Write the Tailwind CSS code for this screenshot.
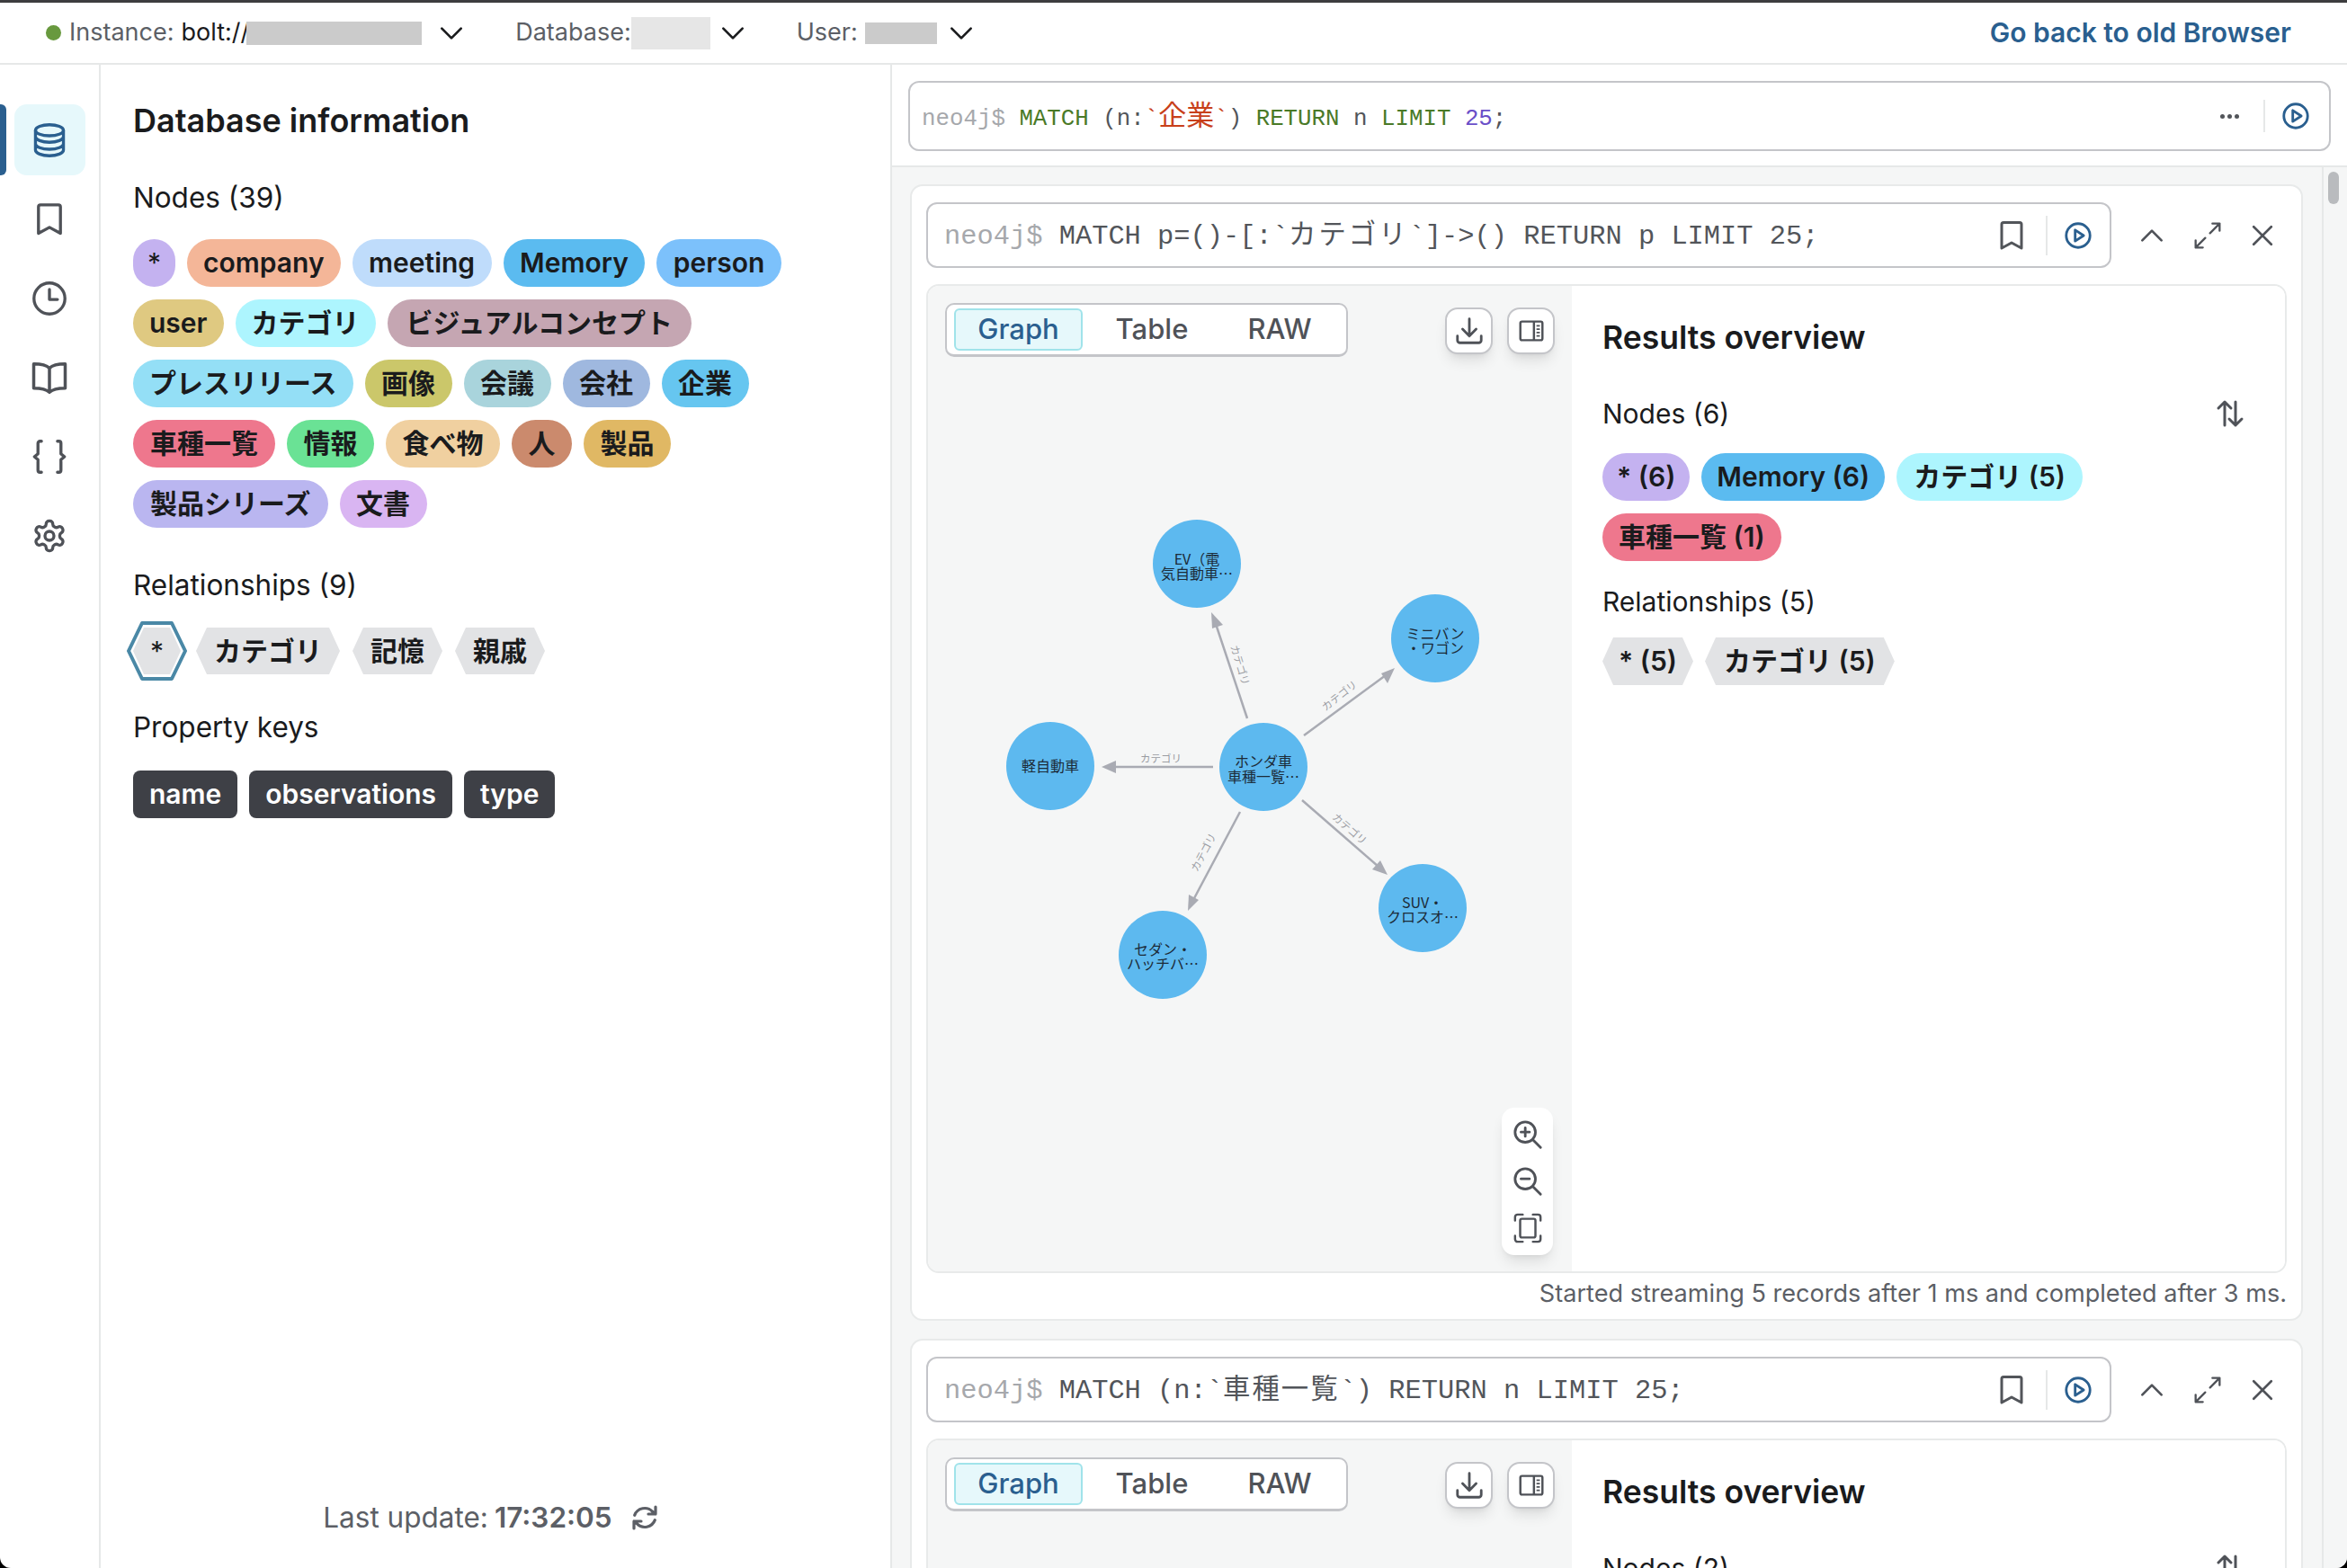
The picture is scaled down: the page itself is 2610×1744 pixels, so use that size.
<!DOCTYPE html>
<html lang="ja">
<head>
  <meta charset="UTF-8">
  <title>Neo4j Browser</title>
  <script src="https://cdn.jsdelivr.net/npm/@tailwindcss/browser@4"></script>
</head>
<body class="bg-black text-[#1a1b1d] font-['Inter','Noto_Sans_CJK_JP',sans-serif] overflow-hidden">
  <!-- shared icons -->
  <svg class="hidden">
    <symbol id="i-bookmark" viewBox="0 0 36 36"><path d="M7 5.500a2 2 0 0 1 2-2h18a2 2 0 0 1 2 2V32l-11-6-11 6z" fill="none" stroke="currentColor" stroke-width="3" stroke-linejoin="round"/></symbol>
    <symbol id="i-play" viewBox="0 0 36 36"><circle cx="18" cy="18" r="14" fill="none" stroke="currentColor" stroke-width="3"/><path d="M14.500 11.500v13l10-6.500z" fill="none" stroke="currentColor" stroke-width="3" stroke-linejoin="round"/></symbol>
    <symbol id="i-up" viewBox="0 0 36 36"><path d="M6 24 18 12l12 12" fill="none" stroke="currentColor" stroke-width="3" stroke-linecap="round" stroke-linejoin="round"/></symbol>
    <symbol id="i-down" viewBox="0 0 36 36"><path d="M6 12l12 12 12-12" fill="none" stroke="currentColor" stroke-width="3" stroke-linecap="round" stroke-linejoin="round"/></symbol>
    <symbol id="i-expand" viewBox="0 0 36 36"><path d="M21 15 33 3m-9 0h9v9M15 21 3 33m9 0H3v-9" fill="none" stroke="currentColor" stroke-width="2.600" stroke-linecap="round" stroke-linejoin="round"/></symbol>
    <symbol id="i-x" viewBox="0 0 36 36"><path d="M7 7l22 22M29 7 7 29" fill="none" stroke="currentColor" stroke-width="3" stroke-linecap="round"/></symbol>
    <symbol id="i-download" viewBox="0 0 36 36"><path d="M18 4v20m-8-8 8 8 8-8M4 24v5a3 3 0 0 0 3 3h22a3 3 0 0 0 3-3v-5" fill="none" stroke="currentColor" stroke-width="3" stroke-linecap="round" stroke-linejoin="round"/></symbol>
    <symbol id="i-panel" viewBox="0 0 36 36"><rect x="5" y="7" width="26" height="22" rx="2" fill="none" stroke="currentColor" stroke-width="2.600"/><path d="M21 7v22" stroke="currentColor" stroke-width="2.600"/><path d="M24 12h4M24 16h4M24 20h4M24 24h4" stroke="currentColor" stroke-width="2"/></symbol>
    <symbol id="i-sort" viewBox="0 0 36 36"><path d="M12 31V5M5 12l7-7 7 7M24 5v26m-7-7 7 7 7-7" fill="none" stroke="currentColor" stroke-width="3" stroke-linecap="round" stroke-linejoin="round"/></symbol>
  </svg>

  <div class="w-[2610px] h-[1744px] flex flex-col bg-white rounded-b-[12px] border-t-[3px] border-[#3d3d3f] overflow-hidden">
    <!-- top bar -->
    <header class="h-[69px] shrink-0 border-b-2 border-[#e6e8e8] flex items-center text-[27px] text-[#5c5f66] pr-[62px]">
      <span class="ml-[51px] w-[17px] h-[17px] rounded-full bg-[#68993e]"></span>
      <span class="ml-[9px]">Instance:</span>
      <span class="ml-[8px] text-[#1a1b1d]">bolt://</span>
      <span class="-ml-[3px] w-[195px] h-[26px] bg-[#cbcbcb]"></span>
      <svg class="ml-[17px] w-[32px] h-[32px] text-[#1a1b1d]"><use href="#i-down"/></svg>
      <span class="ml-[55px]">Database:</span>
      <span class="w-[88px] h-[36px] bg-[#e6e6e6]"></span>
      <svg class="ml-[9px] w-[32px] h-[32px] text-[#1a1b1d]"><use href="#i-down"/></svg>
      <span class="ml-[55px]">User:</span>
      <span class="ml-[8px] w-[80px] h-[24px] bg-[#cbcbcb]"></span>
      <svg class="ml-[11px] w-[32px] h-[32px] text-[#1a1b1d]"><use href="#i-down"/></svg>
      <a class="ml-auto font-semibold text-[#2a5f8f] text-[30px]">Go back to old Browser</a>
    </header>

    <div class="flex flex-1 min-h-0">
      <!-- icon rail -->
      <nav class="relative w-[112px] shrink-0 border-r-2 border-[#e6e8e8] flex flex-col items-center gap-[9px] pt-[44px] text-[#4f5258]">
        <span class="absolute left-0 top-[44px] w-[7px] h-[79px] rounded-r-[6px] bg-[#2a5f8f]"></span>
        <div class="w-[79px] h-[79px] rounded-[14px] bg-[#e6f8fb] flex items-center justify-center text-[#2a5f8f]">
          <svg class="w-[40px] h-[40px]" viewBox="0 0 36 36" fill="none" stroke="currentColor" stroke-width="3"><ellipse cx="18" cy="8" rx="14" ry="5.500"/><path d="M4 8v20c0 3 6.300 5.500 14 5.500S32 31 32 28V8M4 14.500c0 3 6.300 5.500 14 5.500s14-2.500 14-5.500M4 21.500c0 3 6.300 5.500 14 5.500s14-2.500 14-5.500"/></svg>
        </div>
        <div class="w-[79px] h-[79px] flex items-center justify-center"><svg class="w-[40px] h-[40px]"><use href="#i-bookmark"/></svg></div>
        <div class="w-[79px] h-[79px] flex items-center justify-center">
          <svg class="w-[40px] h-[40px]" viewBox="0 0 36 36" fill="none" stroke="currentColor" stroke-width="3" stroke-linecap="round" stroke-linejoin="round"><circle cx="18" cy="18" r="15.500"/><path d="M18 9v10h8"/></svg>
        </div>
        <div class="w-[79px] h-[79px] flex items-center justify-center">
          <svg class="w-[42px] h-[42px]" viewBox="0 0 36 36" fill="none" stroke="currentColor" stroke-width="3" stroke-linejoin="round"><path d="M18 9c-3-3-8-4-15-4v23c7 0 12 1 15 4 3-3 8-4 15-4V5c-7 0-12 1-15 4zM18 9v23"/></svg>
        </div>
        <div class="w-[79px] h-[79px] flex items-center justify-center">
          <svg class="w-[40px] h-[40px]" viewBox="0 0 36 36" fill="none" stroke="currentColor" stroke-width="3" stroke-linecap="round" stroke-linejoin="round"><path d="M10 2.500H8.500a2 2 0 0 0-2 2V15L3 18l3.500 3v10.500a2 2 0 0 0 2 2H10M26 2.500h1.500a2 2 0 0 1 2 2V15L33 18l-3.500 3v10.500a2 2 0 0 1-2 2H26"/></svg>
        </div>
        <div class="w-[79px] h-[79px] flex items-center justify-center">
          <svg class="w-[40px] h-[40px]" viewBox="0 0 24 24" fill="none" stroke="currentColor" stroke-width="2" stroke-linecap="round" stroke-linejoin="round"><path d="M12.220 2h-.44a2 2 0 0 0-2 2v.18a2 2 0 0 1-1 1.730l-.43.25a2 2 0 0 1-2 0l-.15-.08a2 2 0 0 0-2.730.73l-.22.38a2 2 0 0 0 .73 2.730l.15.1a2 2 0 0 1 1 1.720v.51a2 2 0 0 1-1 1.740l-.15.09a2 2 0 0 0-.73 2.730l.22.38a2 2 0 0 0 2.730.73l.15-.08a2 2 0 0 1 2 0l.43.25a2 2 0 0 1 1 1.730V20a2 2 0 0 0 2 2h.44a2 2 0 0 0 2-2v-.18a2 2 0 0 1 1-1.730l.43-.25a2 2 0 0 1 2 0l.15.08a2 2 0 0 0 2.730-.73l.22-.39a2 2 0 0 0-.73-2.730l-.15-.08a2 2 0 0 1-1-1.740v-.5a2 2 0 0 1 1-1.740l.15-.09a2 2 0 0 0 .73-2.730l-.22-.38a2 2 0 0 0-2.730-.73l-.15.08a2 2 0 0 1-2 0l-.43-.25a2 2 0 0 1-1-1.730V4a2 2 0 0 0-2-2z"/><circle cx="12" cy="12" r="3"/></svg>
        </div>
      </nav>

      <!-- database information -->
      <aside class="w-[880px] shrink-0 border-r-2 border-[#e6e8e8] pl-[36px] pr-[40px] pt-[42px] pb-[36px] flex flex-col">
        <h2 class="text-[36px] font-semibold leading-[40px]">Database information</h2>
        <h3 class="mt-[44px] pt-[2px] text-[31.500px] leading-[40px]">Nodes (39)</h3>
        <div class="mt-[26px] flex flex-wrap gap-x-[13px] gap-y-[14px] text-[30px] font-semibold">
          <span class="h-[53px] px-[16px] rounded-full bg-[#c4b2f0] flex items-center font-normal">*</span>
          <span class="h-[53px] px-[18px] rounded-full bg-[#f4b698] flex items-center">company</span>
          <span class="h-[53px] px-[18.500px] rounded-full bg-[#bfdcfb] flex items-center">meeting</span>
          <span class="h-[53px] px-[18.500px] rounded-full bg-[#5bbbf0] flex items-center">Memory</span>
          <span class="h-[53px] px-[18.500px] rounded-full bg-[#7cc1fb] flex items-center">person</span>
          <span class="h-[53px] px-[18px] rounded-full bg-[#dfc981] flex items-center">user</span>
          <span class="h-[53px] px-[18px] rounded-full bg-[#adf5fe] flex items-center">カテゴリ</span>
          <span class="h-[53px] px-[21px] rounded-full bg-[#c5a6b2] flex items-center">ビジュアルコンセプト</span>
          <span class="h-[53px] px-[18px] rounded-full bg-[#94dff6] flex items-center">プレスリリース</span>
          <span class="h-[53px] px-[18.500px] rounded-full bg-[#cbc76a] flex items-center">画像</span>
          <span class="h-[53px] px-[18.500px] rounded-full bg-[#a9d4dc] flex items-center">会議</span>
          <span class="h-[53px] px-[18.500px] rounded-full bg-[#9fb8df] flex items-center">会社</span>
          <span class="h-[53px] px-[18.500px] rounded-full bg-[#66c6f0] flex items-center">企業</span>
          <span class="h-[53px] px-[19px] rounded-full bg-[#ee778d] flex items-center">車種一覧</span>
          <span class="h-[53px] px-[18.500px] rounded-full bg-[#6ae295] flex items-center">情報</span>
          <span class="h-[53px] px-[18.500px] rounded-full bg-[#f0d0a0] flex items-center">食べ物</span>
          <span class="h-[53px] px-[18.500px] rounded-full bg-[#cb8a6d] flex items-center">人</span>
          <span class="h-[53px] px-[18.500px] rounded-full bg-[#e0b864] flex items-center">製品</span>
          <span class="h-[53px] px-[19px] rounded-full bg-[#bab6f0] flex items-center">製品シリーズ</span>
          <span class="h-[53px] px-[18.500px] rounded-full bg-[#d9b5f2] flex items-center">文書</span>
        </div>
        <h3 class="mt-[42px] pt-[2px] text-[31.500px] leading-[40px]">Relationships (9)</h3>
        <div class="mt-[27px] flex gap-x-[14px] text-[30px] font-semibold">
          <span class="relative w-[53px] mr-[3px] h-[52px] flex items-center justify-center font-normal">
            <span class="absolute inset-0 bg-[#e2e3e5] [clip-path:polygon(12px_0,calc(100%-12px)_0,100%_50%,calc(100%-12px)_100%,12px_100%,0_50%)]"></span>
            <svg class="absolute left-[-7px] top-[-7px] w-[67px] h-[66px]" viewBox="0 0 67 66" fill="none" stroke="#4a88a6" stroke-width="4" stroke-linejoin="round"><path d="M17 2h33l15 31-15 31H17L2 33z"/></svg>
            <span class="relative">*</span>
          </span>
          <span class="h-[52px] px-[20px] bg-[#e2e3e5] flex items-center [clip-path:polygon(12px_0,calc(100%-12px)_0,100%_50%,calc(100%-12px)_100%,12px_100%,0_50%)]">カテゴリ</span>
          <span class="h-[52px] px-[20px] bg-[#e2e3e5] flex items-center [clip-path:polygon(12px_0,calc(100%-12px)_0,100%_50%,calc(100%-12px)_100%,12px_100%,0_50%)]">記憶</span>
          <span class="h-[52px] px-[20px] bg-[#e2e3e5] flex items-center [clip-path:polygon(12px_0,calc(100%-12px)_0,100%_50%,calc(100%-12px)_100%,12px_100%,0_50%)]">親戚</span>
        </div>
        <h3 class="mt-[39px] text-[31.500px] leading-[40px]">Property keys</h3>
        <div class="mt-[28px] flex gap-x-[13px] text-[30px] font-semibold text-white">
          <span class="h-[53px] px-[18px] rounded-[8px] bg-[#3e4046] flex items-center">name</span>
          <span class="h-[53px] px-[18px] rounded-[8px] bg-[#3e4046] flex items-center">observations</span>
          <span class="h-[53px] px-[18px] rounded-[8px] bg-[#3e4046] flex items-center">type</span>
        </div>
        <div class="mt-auto h-[40px] flex items-center justify-center text-[31.500px] text-[#5c5f66] pr-[6px]">
          <span>Last update:</span>
          <span class="ml-[7px] font-semibold">17:32:05</span>
          <svg class="ml-[20px] w-[32px] h-[32px]" viewBox="0 0 24 24" fill="none" stroke="currentColor" stroke-width="2.400" stroke-linecap="round" stroke-linejoin="round"><path d="M21 3v6h-6M3 21v-6h6M3.500 10a9 9 0 0 1 15-3L21 9M20.500 14a9 9 0 0 1-15 3L3 15"/></svg>
        </div>
      </aside>

      <!-- editor and results -->
      <main class="flex-1 min-w-0 flex flex-col bg-[#f5f6f6]">
        <div class="h-[114px] shrink-0 bg-white border-b-2 border-[#e6e8e8] px-[18px] pt-[18px]">
          <div class="h-[78px] rounded-[12px] border-2 border-[#c4c5c9] bg-white flex items-center pl-[13px] pr-[20px] font-['Liberation_Mono','Noto_Sans_CJK_JP',monospace] text-[25.800px] text-[#52555a] whitespace-pre">
            <span class="pt-[4px]"><span class="text-[#a6a8ac]">neo4j$ </span><span class="text-[#4a7a28]">MATCH</span><span> (n:</span><span class="text-[#c8401a]">`<span class="text-[31px]">企業</span>`</span><span>) </span><span class="text-[#4a7a28]">RETURN</span><span> n </span><span class="text-[#4a7a28]">LIMIT</span><span> </span><span class="text-[#6a4fc8]">25</span><span>;</span></span>
            <span class="ml-auto text-[#52555a] flex gap-[3px]"><i class="w-[5px] h-[5px] rounded-full bg-current"></i><i class="w-[5px] h-[5px] rounded-full bg-current"></i><i class="w-[5px] h-[5px] rounded-full bg-current"></i></span>
            <span class="ml-[27px] w-[2px] h-[36px] bg-[#e6e8e8]"></span>
            <svg class="ml-[17px] w-[34px] h-[34px] text-[#2a5f8f]"><use href="#i-play"/></svg>
          </div>
        </div>

        <div class="flex-1 min-h-0 flex">
          <div class="flex-1 min-w-0 pl-[20px] pr-[21px] pt-[19px] flex flex-col gap-[20px] overflow-hidden">
            <!-- first result -->
            <section class="h-[1264px] shrink-0 rounded-[14px] border-2 border-[#e8eaea] bg-white px-[16px] pt-[18px]">
              <div class="flex items-center">
                <div class="w-[1318px] h-[73px] rounded-[12px] border-2 border-[#c4c5c9] flex items-center pl-[18px] pr-[18px] font-['Liberation_Mono','Noto_Sans_CJK_JP',monospace] text-[30.400px] text-[#52555a] whitespace-pre">
                  <span class="pt-[5px] text-[#a6a8ac]">neo4j$ </span><span class="pt-[5px]">MATCH p=()-[:`<span class="tracking-[3px]">カテゴリ</span>`]-&gt;() RETURN p LIMIT 25;</span>
                  <svg class="ml-auto w-[36px] h-[36px]"><use href="#i-bookmark"/></svg>
                  <span class="ml-[20px] w-[2px] h-[44px] bg-[#e6e8e8]"></span>
                  <svg class="ml-[17px] w-[34px] h-[34px] text-[#2a5f8f]"><use href="#i-play"/></svg>
                </div>
                <div class="flex-1 flex items-center text-[#4f5258] pl-[29px]">
                  <svg class="w-[32px] h-[32px]"><use href="#i-up"/></svg>
                  <svg class="ml-[30px] w-[32px] h-[32px]"><use href="#i-expand"/></svg>
                  <svg class="ml-[29px] w-[32px] h-[32px]"><use href="#i-x"/></svg>
                </div>
              </div>
              <div class="mt-[18px] h-[1100px] rounded-[14px] border-2 border-[#e8eaea] overflow-hidden flex">
                <div class="relative w-[716px] shrink-0 bg-[#f5f6f6]">
                  <svg class="absolute inset-0 w-[716px] h-[1098px] font-['Noto_Sans_CJK_JP',sans-serif]" viewBox="1031 318 716 1098">
                    <g stroke="#a9abb3" stroke-width="2.500">
                      <path d="M1386 799 1351 694"/>
                      <path d="M1449 818 1540 751"/>
                      <path d="M1348 853H1236"/>
                      <path d="M1447 890 1532 964"/>
                      <path d="M1378 903 1326 1001"/>
                    </g>
                    <g fill="#a9abb3">
                      <path d="M1346 681 1359 695 1347 699z"/>
                      <path d="M1550 743 1542 760 1535 749z"/>
                      <path d="M1224 853 1240 846 1240 860z"/>
                      <path d="M1542 973 1525 967 1534 957z"/>
                      <path d="M1320 1013 1321 995 1332 1001z"/>
                    </g>
                    <g font-size="11.500" fill="#9a9ca2" text-anchor="middle">
                      <text transform="translate(1374 741) rotate(73)">カテゴリ</text>
                      <text transform="translate(1491 777) rotate(-38)">カテゴリ</text>
                      <text x="1290" y="848">カテゴリ</text>
                      <text transform="translate(1497 925) rotate(41)">カテゴリ</text>
                      <text transform="translate(1341 950) rotate(-62)">カテゴリ</text>
                    </g>
                    <g fill="#5db9ef">
                      <circle cx="1330" cy="627" r="49"/>
                      <circle cx="1595" cy="710" r="49"/>
                      <circle cx="1167" cy="852" r="49"/>
                      <circle cx="1404" cy="853" r="49"/>
                      <circle cx="1581" cy="1010" r="49"/>
                      <circle cx="1292" cy="1062" r="49"/>
                    </g>
                    <g font-size="16" fill="#1c2b38" text-anchor="middle">
                      <text x="1330" y="628">EV（電</text><text x="1330" y="644">気自動車…</text>
                      <text x="1595" y="711">ミニバン</text><text x="1595" y="727">・ワゴン</text>
                      <text x="1167" y="858">軽自動車</text>
                      <text x="1404" y="853">ホンダ車</text><text x="1404" y="870">車種一覧…</text>
                      <text x="1581" y="1010">SUV・</text><text x="1581" y="1026">クロスオ…</text>
                      <text x="1292" y="1062">セダン・</text><text x="1292" y="1078">ハッチバ…</text>
                    </g>
                  </svg>
                  <div class="absolute left-[19px] top-[19px] w-[448px] h-[60px] rounded-[10px] border-2 border-b-[3px] border-[#c4c5c9] bg-white flex items-center pl-[8px] text-[31px] font-medium text-[#4f5258]">
                    <span class="w-[143px] h-[47px] rounded-[6px] border-2 border-[#a0e3ea] bg-[#e6f8fb] text-[#2a5f8f] flex items-center justify-center">Graph</span>
                    <span class="ml-[6px] w-[142px] text-center">Table</span>
                    <span class="w-[142px] text-center">RAW</span>
                  </div>
                  <div class="absolute left-[575px] top-[24px] w-[53px] h-[52px] rounded-[14px] border-2 border-[#c4c5c9] bg-white shadow-lg flex items-center justify-center text-[#4f5258]"><svg class="w-[34px] h-[34px]"><use href="#i-download"/></svg></div>
                  <div class="absolute left-[644px] top-[24px] w-[53px] h-[52px] rounded-[14px] border-2 border-[#c4c5c9] bg-white shadow-lg flex items-center justify-center text-[#4f5258]"><svg class="w-[34px] h-[34px]"><use href="#i-panel"/></svg></div>
                  <div class="absolute left-[638px] top-[914px] w-[57px] h-[164px] rounded-[14px] bg-white shadow-lg flex flex-col items-center justify-between py-[13px] text-[#4f5258]">
                    <svg class="w-[34px] h-[34px]" viewBox="0 0 36 36" fill="none" stroke="currentColor" stroke-width="3" stroke-linecap="round"><circle cx="15" cy="15" r="12"/><path d="M24 24l9 9M15 10v10M10 15h10"/></svg>
                    <svg class="w-[34px] h-[34px]" viewBox="0 0 36 36" fill="none" stroke="currentColor" stroke-width="3" stroke-linecap="round"><circle cx="15" cy="15" r="12"/><path d="M24 24l9 9M10 15h10"/></svg>
                    <svg class="w-[34px] h-[34px]" viewBox="0 0 36 36" fill="none" stroke="currentColor" stroke-width="2.600" stroke-linecap="round" stroke-linejoin="round"><rect x="9" y="7" width="18" height="22" rx="2"/><path d="M3 9V5a3 3 0 0 1 3-3h6M24 2h6a3 3 0 0 1 3 3v4M33 27v4a3 3 0 0 1-3 3h-6M12 34H6a3 3 0 0 1-3-3v-4"/></svg>
                  </div>
                </div>
                <div class="flex-1 min-w-0 bg-white pl-[34px] pr-[43px] pt-[38px]">
                  <h2 class="text-[35.500px] font-semibold leading-[40px]">Results overview</h2>
                  <div class="mt-[44px] flex items-center justify-between">
                    <h3 class="text-[30px] leading-[40px]">Nodes (6)</h3>
                    <svg class="w-[36px] h-[36px] text-[#4f5258]"><use href="#i-sort"/></svg>
                  </div>
                  <div class="mt-[24px] flex flex-wrap gap-x-[13px] gap-y-[14px] text-[30px] font-semibold">
                    <span class="h-[53px] px-[16px] rounded-full bg-[#c4b2f0] flex items-center">* (6)</span>
                    <span class="h-[53px] px-[17px] rounded-full bg-[#5bbbf0] flex items-center">Memory (6)</span>
                    <span class="h-[53px] px-[19px] rounded-full bg-[#adf5fe] flex items-center">カテゴリ (5)</span>
                    <span class="h-[53px] px-[18px] rounded-full bg-[#ee778d] flex items-center">車種一覧 (1)</span>
                  </div>
                  <h3 class="mt-[25px] text-[30px] leading-[40px]">Relationships (5)</h3>
                  <div class="mt-[20px] flex gap-x-[13px] text-[30px] font-semibold">
                    <span class="h-[53px] px-[18px] bg-[#e2e3e5] flex items-center [clip-path:polygon(12px_0,calc(100%-12px)_0,100%_50%,calc(100%-12px)_100%,12px_100%,0_50%)]">* (5)</span>
                    <span class="h-[53px] px-[21px] bg-[#e2e3e5] flex items-center [clip-path:polygon(12px_0,calc(100%-12px)_0,100%_50%,calc(100%-12px)_100%,12px_100%,0_50%)]">カテゴリ (5)</span>
                  </div>
                </div>
              </div>
              <p class="mt-[5px] text-right text-[27.100px] leading-[36px] text-[#5c5f66]">Started streaming 5 records after 1 ms and completed after 3 ms.</p>
            </section>

            <!-- second result -->
            <section class="h-[400px] shrink-0 rounded-[14px] border-2 border-[#e8eaea] bg-white px-[16px] pt-[18px]">
              <div class="flex items-center">
                <div class="w-[1318px] h-[73px] rounded-[12px] border-2 border-[#c4c5c9] flex items-center pl-[18px] pr-[18px] font-['Liberation_Mono','Noto_Sans_CJK_JP',monospace] text-[30.400px] text-[#52555a] whitespace-pre">
                  <span class="pt-[5px] text-[#a6a8ac]">neo4j$ </span><span class="pt-[5px]">MATCH (n:`<span class="tracking-[2px]">車種一覧</span>`) RETURN n LIMIT 25;</span>
                  <svg class="ml-auto w-[36px] h-[36px]"><use href="#i-bookmark"/></svg>
                  <span class="ml-[20px] w-[2px] h-[44px] bg-[#e6e8e8]"></span>
                  <svg class="ml-[17px] w-[34px] h-[34px] text-[#2a5f8f]"><use href="#i-play"/></svg>
                </div>
                <div class="flex-1 flex items-center text-[#4f5258] pl-[29px]">
                  <svg class="w-[32px] h-[32px]"><use href="#i-up"/></svg>
                  <svg class="ml-[30px] w-[32px] h-[32px]"><use href="#i-expand"/></svg>
                  <svg class="ml-[29px] w-[32px] h-[32px]"><use href="#i-x"/></svg>
                </div>
              </div>
              <div class="mt-[18px] h-[300px] rounded-[14px] border-2 border-[#e8eaea] overflow-hidden flex">
                <div class="relative w-[716px] shrink-0 bg-[#f5f6f6]">
                  <div class="absolute left-[19px] top-[19px] w-[448px] h-[60px] rounded-[10px] border-2 border-b-[3px] border-[#c4c5c9] bg-white flex items-center pl-[8px] text-[31px] font-medium text-[#4f5258]">
                    <span class="w-[143px] h-[47px] rounded-[6px] border-2 border-[#a0e3ea] bg-[#e6f8fb] text-[#2a5f8f] flex items-center justify-center">Graph</span>
                    <span class="ml-[6px] w-[142px] text-center">Table</span>
                    <span class="w-[142px] text-center">RAW</span>
                  </div>
                  <div class="absolute left-[575px] top-[24px] w-[53px] h-[52px] rounded-[14px] border-2 border-[#c4c5c9] bg-white shadow-lg flex items-center justify-center text-[#4f5258]"><svg class="w-[34px] h-[34px]"><use href="#i-download"/></svg></div>
                  <div class="absolute left-[644px] top-[24px] w-[53px] h-[52px] rounded-[14px] border-2 border-[#c4c5c9] bg-white shadow-lg flex items-center justify-center text-[#4f5258]"><svg class="w-[34px] h-[34px]"><use href="#i-panel"/></svg></div>
                </div>
                <div class="flex-1 min-w-0 bg-white pl-[34px] pr-[43px] pt-[38px]">
                  <h2 class="text-[35.500px] font-semibold leading-[40px]">Results overview</h2>
                  <div class="mt-[44px] flex items-center justify-between">
                    <h3 class="text-[30px] leading-[40px]">Nodes (2)</h3>
                    <svg class="w-[36px] h-[36px] text-[#4f5258]"><use href="#i-sort"/></svg>
                  </div>
                </div>
              </div>
            </section>
          </div>
          <!-- scrollbar -->
          <div class="w-[28px] shrink-0 border-l-2 border-[#e6e8e8] pl-[5px] pt-[5px]">
            <div class="w-[12px] h-[36px] rounded-full bg-[#b9bbbe]"></div>
          </div>
        </div>
      </main>
    </div>
  </div>
</body>
</html>
